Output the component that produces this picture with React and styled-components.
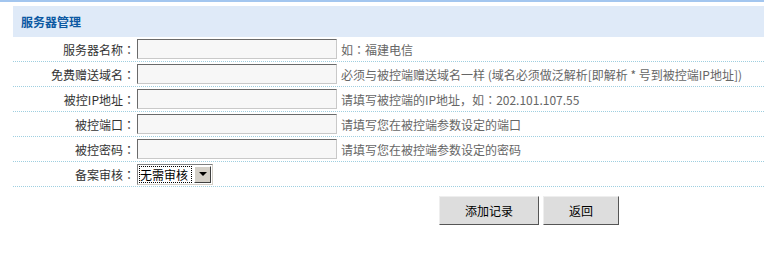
import React from "react";
import styled, { createGlobalStyle } from "styled-components";

const GlobalStyle = createGlobalStyle`
  body {
    margin: 0;
    background: #ffffff;
    font-family: "Noto Sans CJK SC", "Liberation Sans", sans-serif;
    font-size: 12px;
    color: #333333;
  }
`;

const TopLine = styled.div`
  height: 2px;
  background-color: #a3c6ef;
`;

const Page = styled.div`
  padding: 4px 0 40px 13px;
`;

const Header = styled.div`
  height: 31px;
  display: flex;
  align-items: center;
  padding-left: 8px;
  background-color: #dfeaf8;
  color: #0b58a2;
  font-weight: bold;
  font-size: 12px;
`;

const Row = styled.div`
  display: flex;
  align-items: center;
  height: 24px;
  border-bottom: 1px dotted #9fcfe0;
`;

const Label = styled.div`
  width: 122px;
  padding-right: 2px;
  text-align: right;
  white-space: nowrap;
`;

/* the full-width colon sits in the middle of its box, as in the reference */
const Colon = styled.span`
  font-family: "Noto Sans CJK TC", "Noto Sans CJK SC", sans-serif;
`;

const Input = styled.input`
  box-sizing: border-box;
  width: 200px;
  height: 20px;
  margin: 0;
  border: 1px solid;
  border-color: #6a6a6a #c9c9c9 #c9c9c9 #6a6a6a;
  background-color: #f7f7f7;
  outline: none;
`;

const Hint = styled.span`
  margin-left: 4px;
  color: #666666;
  white-space: nowrap;
`;

const Select = styled.div`
  box-sizing: border-box;
  display: flex;
  align-items: stretch;
  width: 76px;
  height: 21px;
  border: 1px solid;
  border-color: #808080 #d4d0c8 #d4d0c8 #808080;
  background-color: #ffffff;
`;

const SelectValue = styled.span`
  display: flex;
  align-items: center;
  margin: 1px;
  padding: 0 1px;
  outline: 1px dotted #000000;
  outline-offset: -1px;
  color: #000000;
  white-space: nowrap;
  flex: 1;
`;

const SelectArrow = styled.span`
  box-sizing: border-box;
  width: 17px;
  margin: 1px;
  display: flex;
  align-items: center;
  justify-content: center;
  background-color: #d4d0c8;
  border: 1px solid;
  border-color: #ffffff #404040 #404040 #ffffff;

  &::after {
    content: "";
    border-left: 4px solid transparent;
    border-right: 4px solid transparent;
    border-top: 4px solid #000000;
  }
`;

const Actions = styled.div`
  display: flex;
  gap: 4px;
  margin-top: 9px;
  padding-left: 426px;
`;

const Button = styled.button`
  box-sizing: border-box;
  width: ${(p) => p.$width}px;
  height: 29px;
  margin: 0;
  padding: 0;
  font-family: inherit;
  font-size: 12px;
  color: #000000;
  background-color: #dddddd;
  border: 1px solid;
  border-color: #eeeeee #555555 #555555 #eeeeee;
  cursor: pointer;
`;

const fields = [
  { label: "服务器名称", hint: ["如", "福建电信"] },
  {
    label: "免费赠送域名",
    hint: ["必须与被控端赠送域名一样 (域名必须做泛解析[即解析 * 号到被控端IP地址])"],
  },
  { label: "被控IP地址", hint: ["请填写被控端的IP地址，如", "202.101.107.55"] },
  { label: "被控端口", hint: ["请填写您在被控端参数设定的端口"] },
  { label: "被控密码", hint: ["请填写您在被控端参数设定的密码"] },
];

function App() {
  return (
    <>
      <GlobalStyle />
      <TopLine />
      <Page>
        <Header>服务器管理</Header>
        {fields.map((f) => (
          <Row key={f.label}>
            <Label>
              {f.label}
              <Colon>：</Colon>
            </Label>
            <Input type="text" />
            <Hint>
              {f.hint[0]}
              {f.hint[1] && (
                <>
                  <Colon>：</Colon>
                  {f.hint[1]}
                </>
              )}
            </Hint>
          </Row>
        ))}
        <Row>
          <Label>
            备案审核<Colon>：</Colon>
          </Label>
          <Select>
            <SelectValue>无需审核</SelectValue>
            <SelectArrow />
          </Select>
        </Row>
        <Actions>
          <Button $width={100}>添加记录</Button>
          <Button $width={76}>返回</Button>
        </Actions>
      </Page>
    </>
  );
}

export default App;
